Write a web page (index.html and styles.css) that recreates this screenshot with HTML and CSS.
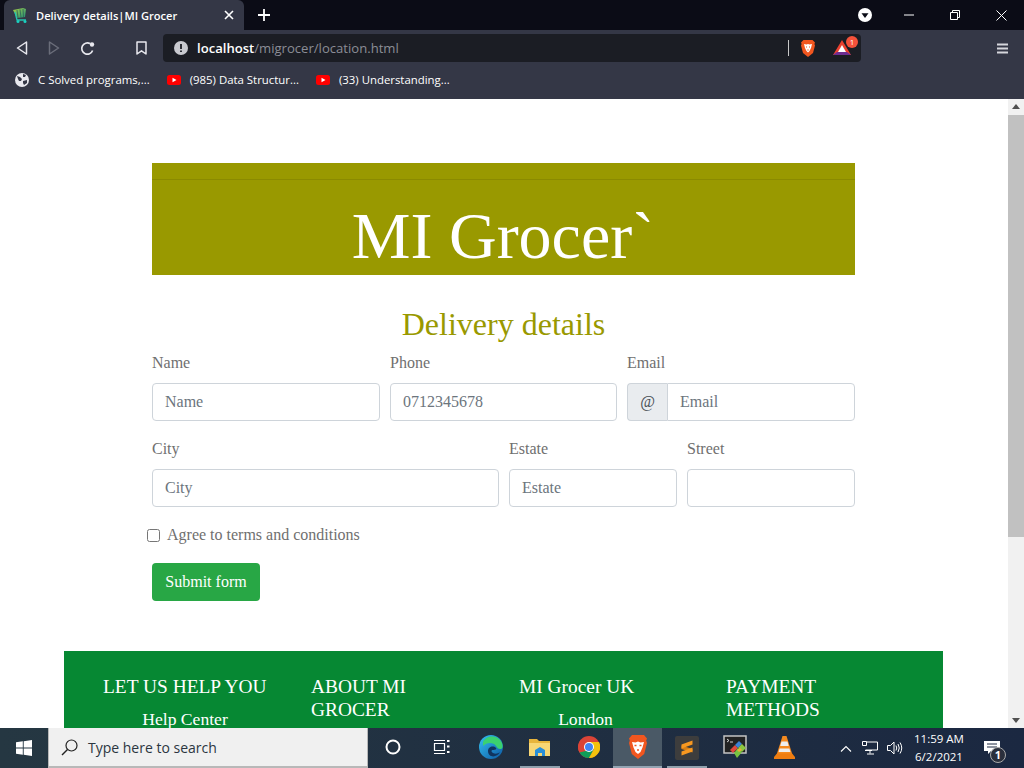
FILE: index.html
```html
<!DOCTYPE html>
<html lang="en">
<head>
	<meta charset="UTF-8">
	<title>Delivery details|MI Grocer</title>
	<link rel="stylesheet" href="styles.css">
</head>
<body>
	<div class="screen">
		<!-- browser tabs -->
		<div class="tabstrip">
			<div class="tab">
				<svg class="favicon" width="16" height="16" viewBox="0 0 16 16"><defs><linearGradient id="cartA" x1="0" y1="0" x2="1" y2="1"><stop offset="0" stop-color="#a8cf45"/><stop offset="1" stop-color="#1f8f78"/></linearGradient></defs><path d="M1 3l10-2 3 1-1 8-8 1z" fill="url(#cartA)"/><path d="M5 3l1 8M8 2.500l1 8M11 2l.5 8" stroke="#2f5f58" stroke-width=".8"/><path d="M3 5l2 8h9" fill="none" stroke="#25c5b0" stroke-width="1.300"/><circle cx="6" cy="14.500" r="1.500" fill="#1ad0c0"/><circle cx="13" cy="14.500" r="1.500" fill="#1ad0c0"/></svg>
				<span class="tab-title">Delivery details|MI Grocer</span>
				<svg class="tab-close" width="10" height="10" viewBox="0 0 10 10"><path d="M1 1l8 8M9 1l-8 8" stroke="#fff" stroke-width="1.600"/></svg>
			</div>
			<svg class="new-tab" width="12" height="12" viewBox="0 0 12 12"><path d="M6 0v12M0 6h12" stroke="#fff" stroke-width="1.800"/></svg>
			<div class="win-controls">
				<svg class="tab-search" width="14" height="14" viewBox="0 0 14 14"><circle cx="7" cy="7" r="7" fill="#fff"/><path d="M3.500 5.200h7L7 10z" fill="#0b0c16"/></svg>
				<span class="win-btn"><svg width="10" height="10" viewBox="0 0 10 10"><path d="M0 5h10" stroke="#fff"/></svg></span>
				<span class="win-btn"><svg width="10" height="10" viewBox="0 0 10 10"><path d="M2.500 2.500V.5h7v7H7.500M.5 2.500h7v7h-7z" fill="none" stroke="#fff"/></svg></span>
				<span class="win-btn"><svg width="11" height="11" viewBox="0 0 11 11"><path d="M.5.5l10 10M10.500.5l-10 10" stroke="#fff"/></svg></span>
			</div>
		</div>

		<!-- address bar -->
		<div class="toolbar">
			<svg class="nav-icon" width="12" height="14" viewBox="0 0 12 14"><path d="M10.500 1L1.500 7l9 6z" fill="none" stroke="#e8e8ee" stroke-width="1.500" stroke-linejoin="round"/></svg>
			<svg class="nav-icon" width="12" height="14" viewBox="0 0 12 14"><path d="M1.500 1l9 6-9 6z" fill="none" stroke="#6a6d7a" stroke-width="1.500" stroke-linejoin="round"/></svg>
			<svg class="nav-icon" width="15" height="15" viewBox="0 0 15 15"><path d="M12.600 9.500A5.600 5.600 0 1 1 10 2.600" fill="none" stroke="#e8e8ee" stroke-width="1.700"/><circle cx="12" cy="3.500" r="2.200" fill="#e8e8ee"/></svg>
			<svg class="bookmark" width="11" height="14" viewBox="0 0 11 14"><path d="M1 1h9v12L5.500 9.800 1 13z" fill="none" stroke="#e8e8ee" stroke-width="1.500" stroke-linejoin="round"/></svg>
			<div class="address">
				<svg width="14" height="14" viewBox="0 0 14 14"><circle cx="7" cy="7" r="7" fill="#c9cad0"/><path d="M7 3v5M7 9.500v1.600" stroke="#1b1d24" stroke-width="1.800"/></svg>
				<span class="url"><b>localhost</b>/migrocer/location.html</span>
				<span class="address-sep"></span>
				<svg width="16" height="18" viewBox="0 0 16 18"><path d="M3.500 1h9L15 3.500l-.6 1.500.6 1.500-2 7.500L8 18l-5-4L1 6.500 1.600 5 1 3.500z" fill="#f1561f"/><path d="M4 5l2.500.5L8 5l1.500.5L12 5l-1 4-1.500 3L8 13.500 6.500 12 5 9z" fill="#fff"/><path d="M6 8h1M9 8h1M7.300 11h1.400" stroke="#f1561f"/></svg>
				<span class="rewards">
					<svg width="18" height="16" viewBox="0 0 18 16"><path d="M9 0l9 15H0z" fill="#e9402f"/><path d="M0 15l4-3h10l4 3z" fill="#6c2d91"/><path d="M9 5l4 7H5z" fill="#fff"/></svg>
					<i class="rewards-badge">1</i>
				</span>
			</div>
			<svg class="menu" width="11" height="11" viewBox="0 0 11 11"><path d="M0 1.500h11M0 5.500h11M0 9.500h11" stroke="#d5d6dc" stroke-width="2"/></svg>
		</div>

		<!-- bookmarks -->
		<div class="bookmarks">
			<span class="mark">
				<svg width="14" height="14" viewBox="0 0 14 14"><circle cx="7" cy="7" r="7" fill="#e8e8ee"/><path d="M2 3l3 1 2 2-1 2-2 0-1-2zM8 1l3 1-1 2-2 0zM8 8l4-1 0 3-3 2-1-2z" fill="#343746"/></svg>
				C Solved programs,...
			</span>
			<span class="mark">
				<svg width="14" height="10" viewBox="0 0 14 10"><rect width="14" height="10" rx="2.500" fill="#f00"/><path d="M5.500 2.800L9.500 5l-4 2.200z" fill="#fff"/></svg>
				(985) Data Structur...
			</span>
			<span class="mark">
				<svg width="14" height="10" viewBox="0 0 14 10"><rect width="14" height="10" rx="2.500" fill="#f00"/><path d="M5.500 2.800L9.500 5l-4 2.200z" fill="#fff"/></svg>
				(33) Understanding...
			</span>
		</div>

		<!-- page -->
		<div class="viewport">
			<main class="page">
				<div class="content">
					<header class="banner">
						<hr class="banner-line">
						<h1>MI Grocer`</h1>
					</header>
					<h2>Delivery details</h2>
					<form>
						<div class="form-row thirds">
							<div class="field">
								<label>Name</label>
								<input class="control" type="text" placeholder="Name">
							</div>
							<div class="field">
								<label>Phone</label>
								<input class="control" type="text" placeholder="0712345678">
							</div>
							<div class="field">
								<label>Email</label>
								<div class="input-group">
									<span class="addon">@</span>
									<input class="control" type="text" placeholder="Email">
								</div>
							</div>
						</div>
						<div class="form-row city-row">
							<div class="field">
								<label>City</label>
								<input class="control" type="text" placeholder="City">
							</div>
							<div class="field">
								<label>Estate</label>
								<input class="control" type="text" placeholder="Estate">
							</div>
							<div class="field">
								<label>Street</label>
								<input class="control" type="text">
							</div>
						</div>
						<div class="check">
							<input type="checkbox">
							<label>Agree to terms and conditions</label>
						</div>
						<button class="submit" type="button">Submit form</button>
					</form>
				</div>
				<footer class="footer">
					<div class="foot-col help">
						<h5>LET US HELP YOU</h5>
						<p>Help Center</p>
					</div>
					<div class="foot-col about">
						<h5>ABOUT MI GROCER</h5>
					</div>
					<div class="foot-col uk">
						<h5>MI Grocer UK</h5>
						<p>London</p>
					</div>
					<div class="foot-col pay">
						<h5>PAYMENT METHODS</h5>
					</div>
				</footer>
			</main>
			<div class="scrollbar">
				<span class="arrow up"></span>
				<div class="track"><div class="thumb"></div></div>
				<span class="arrow down"></span>
			</div>
		</div>

		<!-- windows taskbar -->
		<div class="taskbar">
			<div class="start">
				<svg width="16" height="16" viewBox="0 0 16 16"><path d="M0 2.300l6.800-1v6.200H0zM7.700 1.200L16 0v7.500H7.700zM0 8.400h6.800v6.300L0 13.700zM7.700 8.400H16V16l-8.300-1.200z" fill="#fff"/></svg>
			</div>
			<div class="search">
				<svg width="17" height="17" viewBox="0 0 17 17"><circle cx="10.500" cy="6.500" r="5.500" fill="none" stroke="#222" stroke-width="1.200"/><path d="M6.500 10.500L1 16" stroke="#222" stroke-width="1.500"/></svg>
				<span>Type here to search</span>
			</div>
			<div class="tile"><svg width="16" height="16" viewBox="0 0 16 16"><circle cx="8" cy="8" r="6.500" fill="none" stroke="#fff" stroke-width="2"/></svg></div>
			<div class="tile"><svg width="17" height="16" viewBox="0 0 17 16"><path d="M1.500 4.500h10v7h-10zM1 1.500h11M1 14.500h11" fill="none" stroke="#fff" stroke-width="1.200"/><path d="M14 1h2.500v2H14zM14 6.500h2.500v2H14zM14 12h2.500v2H14z" fill="#fff"/></svg></div>
			<div class="tile">
				<svg width="24" height="24" viewBox="0 0 24 24"><defs><linearGradient id="edgeA" x1="0" y1="0" x2="1" y2="1"><stop offset="0" stop-color="#35c1f1"/><stop offset="1" stop-color="#0c59a4"/></linearGradient></defs><circle cx="12" cy="12" r="12" fill="url(#edgeA)"/><path d="M4 7C7 0 19-1 23 8c1 3 1 6-2 6-3 0-3-3-6-5C11 7 7 8 4 11z" fill="#3bd16f"/><path d="M9 16c0-4 5-6 8-3 1 1-1 2-3 2-2 0-2 2 0 3 2 1 5 1 7-1-3 6-12 6-12-1z" fill="#11345e"/></svg>
			</div>
			<div class="tile running">
				<svg width="22" height="20" viewBox="0 0 22 20"><path d="M0 1h8l2 2h11v15H0z" fill="#e8b53c"/><path d="M0 5h21v13H0z" fill="#f8d775"/><path d="M6 18v-6l5-3 5 3v6h-3v-3H9v3z" fill="#2a8fd8"/></svg>
			</div>
			<div class="tile">
				<svg width="22" height="22" viewBox="0 0 22 22"><circle cx="11" cy="11" r="11" fill="#db4437"/><path d="M11 11L1.500 16.500A11 11 0 0 1 3 3.500z" fill="#db4437"/><path d="M1.500 16.500A11 11 0 0 0 11 22l5-9z" fill="#0f9d58"/><path d="M11 22A11 11 0 0 0 21 6H11l5 7z" fill="#f4c20d"/><circle cx="11" cy="11" r="5" fill="#fff"/><circle cx="11" cy="11" r="4" fill="#4285f4"/></svg>
			</div>
			<div class="tile active">
				<svg width="22" height="24" viewBox="0 0 22 24"><path d="M5 0h12l3 3.500-.8 2 .8 2.500-2.800 11L11 24l-6.200-5L2 8l.8-2.500L2 3.500z" fill="#f1561f"/><path d="M5 7l3.500.5L11 6.500l2.500 1L17 7l-1.500 5.500-2 4.500L11 19l-2.500-2-2-4.500z" fill="#fff"/><path d="M7.500 10.500h2M12.500 10.500h2M10 15h2" stroke="#f1561f" stroke-width="1.300"/></svg>
			</div>
			<div class="tile running">
				<svg width="24" height="24" viewBox="0 0 24 24"><rect width="24" height="24" rx="2" fill="#3d3d3d"/><path d="M6.500 9.500L17.500 13v3.500L6.500 13z" fill="#d97f14"/><path d="M6.500 8.500L17.500 4.500v4L6.500 12.500z" fill="#f89820"/><path d="M6.500 15.500L17.500 11.500v4L6.500 19.500z" fill="#f89820"/></svg>
			</div>
			<div class="tile">
				<svg width="25" height="24" viewBox="0 0 25 24"><rect x="1" y="1" width="22" height="17" fill="#222" stroke="#c4c4c4" stroke-width="1.500"/><path d="M4 4l2 1.500L4 7M7 7h3" stroke="#fff" fill="none" stroke-width=".8"/><path d="M7 15l5-5 3 3-5 5z" fill="#e0483e"/><path d="M12 10l4-4 3 3-4 4z" fill="#3b82d6"/><path d="M15 13l4-4 4 4-4 4z" fill="#8cc63f"/><path d="M11 18l4-5 4 4-5 6z" fill="#79c340"/><path d="M14 15l3-2 2 2-3 2z" fill="#e7b33a"/></svg>
			</div>
			<div class="tile">
				<svg width="21" height="23" viewBox="0 0 21 23"><path d="M8.500 0h4l6 19H2.500z" fill="#f58a1f"/><path d="M7.500 5.500h6l1.200 4.500H6.200zM5.600 12.500h9.800l1 3.500H4.600z" fill="#eee"/><path d="M3 17.500h15l3 3.500v2H0v-2z" fill="#ee7d11"/></svg>
			</div>
			<div class="tray">
				<svg width="12" height="7" viewBox="0 0 12 7"><path d="M1 6.500l5-5 5 5" fill="none" stroke="#fff" stroke-width="1.100"/></svg>
				<svg class="tray-net" width="16" height="14" viewBox="0 0 16 14"><path d="M3.500 1h12v8h-12M3 9.500h7M8 9.500v3M5 13h7" fill="none" stroke="#fff"/><path d="M.5.500h4v4h-4z" fill="#1c2840" stroke="#fff"/></svg>
				<svg class="tray-vol" width="16" height="14" viewBox="0 0 16 14"><path d="M.5 4.500h3L7 1v12L3.500 9.500h-3z" fill="none" stroke="#fff"/><path d="M9 4.500q1.500 2.500 0 5M11 3q2.500 4 0 8M13 1.500q3.500 5.500 0 11" fill="none" stroke="#fff"/></svg>
				<div class="clock"><span>11:59 AM</span><span>6/2/2021</span></div>
				<div class="notify">
					<svg width="16" height="14" viewBox="0 0 16 14"><path d="M0 0h16v10H7l-3 3v-3H0z" fill="#fff"/><path d="M3 3h10M3 6h10" stroke="#1c2840"/></svg>
					<i class="notify-count">1</i>
				</div>
			</div>
		</div>
	</div>
</body>
</html>
```

FILE: styles.css
```css
*{box-sizing:border-box;}
html,body{margin:0;padding:0;height:100%;overflow:hidden;}
body{font-family:"Liberation Serif",serif;}
.screen{display:flex;flex-direction:column;width:1024px;height:768px;overflow:hidden;}

/* tabs */
.tabstrip{display:flex;align-items:center;flex:none;height:30px;padding-left:4px;background:#0b0c16;}
.tab{display:flex;align-items:center;align-self:flex-end;width:240px;height:30px;padding:0 10px 0 8px;background:#343746;border-radius:6px 6px 0 0;}
.favicon{flex:none;}
.tab-title{flex:1;margin-left:8px;color:#fff;font:600 11.1px "Open Sans",sans-serif;white-space:nowrap;}
.new-tab{margin-left:14px;}
.win-controls{display:flex;align-items:center;margin-left:auto;}
.tab-search{margin-right:14px;}
.win-btn{display:flex;align-items:center;justify-content:center;width:46px;height:30px;}

/* address bar */
.toolbar{display:flex;align-items:center;flex:none;height:36px;padding:0 16px;background:#343746;}
.nav-icon{margin-right:20px;}
.nav-icon:first-child{margin-right:20px;}
.bookmark{margin-left:21px;}
.address{display:flex;align-items:center;width:698px;height:28px;margin-left:16px;padding:0 2px 0 11px;background:#1b1d24;border-radius:4px;}
.url{flex:1;margin-left:9px;color:#8b8d96;font:13.100px "Open Sans",sans-serif;white-space:nowrap;}
.url b{color:#fff;font-weight:600;}
.address-sep{width:1px;height:16px;margin-right:11px;background:#c8c8c8;}
.rewards{position:relative;display:flex;margin-left:17px;margin-right:8px;}
.rewards-badge{position:absolute;top:-4px;right:-7px;width:12px;height:12px;background:#f4523b;border-radius:50%;color:#fff;font:normal 8px/12px "Open Sans",sans-serif;text-align:center;}
.menu{margin-left:auto;}

/* bookmarks */
.bookmarks{display:flex;align-items:center;flex:none;height:33px;padding:0 0 6px 15px;background:#343746;}
.mark{display:flex;align-items:center;gap:9px;margin-right:17px;color:#fff;font:11.400px "Open Sans",sans-serif;white-space:nowrap;}

/* page */
.viewport{display:flex;flex:1;min-height:0;overflow:hidden;background:#fff;}
.page{flex:1;min-width:0;height:629px;overflow:hidden;}
.content{width:703px;margin:64px 0 0 152px;}
.banner{height:112px;padding-top:16px;background:#990;}
.banner-line{height:1px;margin:0;border:0;background:#8a8a00;}
.banner h1{margin:16px 0 0;padding-right:1px;color:#fff;font-size:66px;font-weight:400;line-height:79px;text-align:center;}
h2{margin:30px 0 8px;color:#990;font-size:32px;font-weight:400;line-height:38px;text-align:center;}
label{display:block;margin-bottom:8px;color:#6f6f6f;font-size:16px;line-height:24px;}
.form-row{display:grid;gap:10px;margin-bottom:16px;}
.thirds{grid-template-columns:228px 227px 228px;}
.city-row{grid-template-columns:347px 168px 168px;}
.control{display:block;width:100%;height:38px;padding:6px 12px;border:1px solid #ced4da;border-radius:4px;background:#fff;color:#495057;font:16px/24px "Liberation Serif",serif;}
.control::placeholder{color:#6c757d;opacity:1;}
.input-group{display:flex;}
.addon{flex:none;width:40px;height:38px;border:1px solid #ced4da;border-right:0;border-radius:4px 0 0 4px;background:#e9ecef;color:#495057;font-size:16px;line-height:36px;text-align:center;}
.input-group .control{flex:1;min-width:0;border-radius:0 4px 4px 0;}
.check{display:flex;align-items:center;gap:7px;height:24px;margin:0 0 16px -5px;}
.check input{width:13px;height:13px;margin:0;}
.check label{margin:0;}
.submit{display:block;width:108px;height:38px;padding:0;border:0;border-radius:4px;background:#28a745;color:#fff;font:16px "Liberation Serif",serif;}

/* footer */
.footer{display:grid;grid-template-columns:208px 208px 207px 208px;width:879px;height:300px;margin:50px 0 0 64px;padding:24px 0 0 39px;background:#068833;color:#fff;}
.foot-col h5{margin:0 0 10px;font-size:19.400px;font-weight:400;line-height:23px;white-space:normal;}
.foot-col p{margin:0;font-size:17.600px;line-height:22px;text-align:center;}
.help{width:164px;}
.help h5{white-space:nowrap;}
.about,.pay{width:150px;}
.uk{width:133px;}

/* scrollbar */
.scrollbar{display:flex;flex-direction:column;flex:none;width:16px;height:629px;background:#f1f1f1;}
.arrow{display:block;flex:none;height:16px;position:relative;}
.arrow::after{content:"";position:absolute;left:4px;border-left:4px solid transparent;border-right:4px solid transparent;}
.up::after{top:5px;border-bottom:5px solid #505050;}
.down::after{top:6px;border-top:5px solid #505050;}
.track{flex:1;}
.thumb{height:422px;background:#c1c1c1;}

/* taskbar */
.taskbar{display:flex;flex:none;height:40px;background:linear-gradient(90deg,#253742,#1b2841);color:#fff;}
.start{display:flex;align-items:center;justify-content:center;flex:none;width:48px;}
.search{display:flex;align-items:center;flex:none;width:320px;padding-left:12px;background:#f0f0f0;border:1px solid #b8b8b8;border-bottom-width:2px;border-top:0;color:#2b3640;font:14px "Open Sans",sans-serif;}
.search span{margin-left:10px;}
.tile{display:flex;align-items:center;justify-content:center;flex:none;width:49px;height:40px;border-bottom:2px solid transparent;}
.running{background:linear-gradient(#0000 38px,#8fa0ad 38px) no-repeat center/40px 40px;border:0;}
.active{background:#4a5966;border-bottom-color:#93a4b2;}
.tray{display:flex;align-items:center;flex:1;padding-left:31px;}
.tray-net{margin-left:10px;}
.tray-vol{margin-left:9px;}
.clock{display:flex;flex-direction:column;align-items:center;width:62px;margin-left:5px;font:11.500px/18px "Open Sans",sans-serif;}
.notify{position:relative;margin-left:14px;}
.notify svg{display:block;}
.notify-count{position:absolute;top:6px;left:6px;width:16px;height:16px;border:1px solid #aaa;border-radius:50%;background:#2a2f3c;color:#fff;font:normal bold 11px/14px "Open Sans",sans-serif;text-align:center;}
```
